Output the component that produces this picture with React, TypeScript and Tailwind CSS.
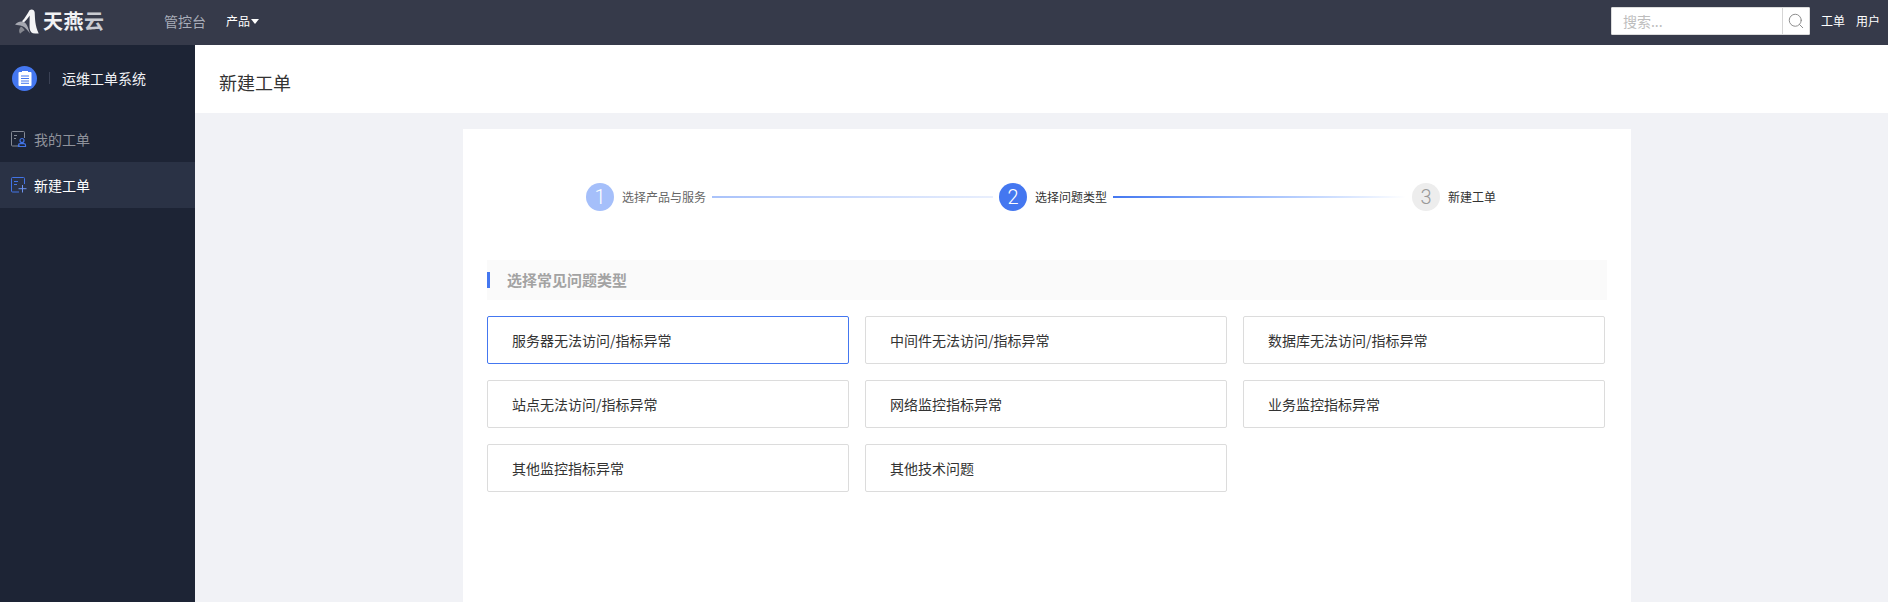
import { Search } from 'lucide-react'

const FONT = "font-['Noto_Sans_CJK_SC','Liberation_Sans',sans-serif]"

const TYPES = [
  '服务器无法访问/指标异常',
  '中间件无法访问/指标异常',
  '数据库无法访问/指标异常',
  '站点无法访问/指标异常',
  '网络监控指标异常',
  '业务监控指标异常',
  '其他监控指标异常',
  '其他技术问题',
]

function Logo() {
  return (
    <svg width="24" height="25" viewBox="0 0 24 25" className="shrink-0">
      <path d="M14.500 1.200C17 -.2 19.500 1 19.700 3.500c.4 6.500.2 13 4 21h-3.500c-3.500 0-5.200-2-5.500-5-.3-3.200 0-8 0-13C13 9 10.500 12 8.500 13.700L7 12.200C10 9.200 12.500 4.500 14.500 1.200z" fill="#f4f4f6" />
      <path d="M0 15.500c3.500-3.800 8.500-3.800 11-.8 1.800 2.200 2.600 5.800 4 9.800-3-3.800-5-6.500-8-7.500-2.200-.7-4.500-.7-7-1.500z" fill="#a5a7b0" />
      <path d="M5 24.800c-1.500-2.500-1-5.300 1-7.300 1.600 1 3 2.300 3.700 3.800-1.600.8-3.200 2-4.700 3.500z" fill="#85878f" />
    </svg>
  )
}

function ClipboardIcon() {
  return (
    <svg width="14" height="16" viewBox="0 0 14 16">
      <path d="M1.500 2h2.500V1h6v1h2.500a1 1 0 0 1 1 1v12a1 1 0 0 1-1 1h-11a1 1 0 0 1-1-1V3a1 1 0 0 1 1-1z" fill="#fff" />
      <path d="M3 6h8M3 8.500h8M3 11h8M3 13.300h8" stroke="#4477f0" strokeWidth="1" />
    </svg>
  )
}

function MyOrdersIcon() {
  return (
    <svg width="16" height="16" viewBox="0 0 16 16" fill="none" className="shrink-0">
      <path d="M9 15H1.500a1 1 0 0 1-1-1V1.500a1 1 0 0 1 1-1h11a1 1 0 0 1 1 1V7" stroke="#858a96" strokeWidth="1" />
      <path d="M3 4.500h3M3 7.500h2" stroke="#858a96" strokeWidth="1" />
      <circle cx="11" cy="9.500" r="2" stroke="#4274e6" strokeWidth="1.200" />
      <path d="M7.500 15.500v-1.500c0-.8 1-1.300 1.800-1.300h3.400c.8 0 1.800.5 1.800 1.300v1.500z" stroke="#4274e6" strokeWidth="1.200" />
    </svg>
  )
}

function NewOrderIcon() {
  return (
    <svg width="16" height="16" viewBox="0 0 16 16" fill="none" className="shrink-0">
      <path d="M8 15H1.500a1 1 0 0 1-1-1V1.500a1 1 0 0 1 1-1h11a1 1 0 0 1 1 1V7" stroke="#4274e6" strokeWidth="1" />
      <path d="M3 4.500h4M3 7.500h3" stroke="#4274e6" strokeWidth="1" />
      <path d="M11.500 8v7.500M7.500 11.700h8" stroke="#6d93ee" strokeWidth="1" />
    </svg>
  )
}

function TopBar() {
  return (
    <header className="h-[45px] shrink-0 bg-[#363a4a] flex items-center pl-[15px] pr-[8px] pb-[3px]">
      <Logo />
      <span className="ml-[4px] w-[112px] text-[20px] leading-none font-bold tracking-[0.5px] text-[#f2f2f4]">
        天燕<span className="text-[#c9cbd2]">云</span>
      </span>
      <span className="ml-[9px] mt-[1px] text-[14px] text-[#a9adb9]">管控台</span>
      <span className="ml-[20px] text-[12px] text-white">产品</span>
      <span className="ml-[1px] w-0 h-0 border-x-[4.500px] border-x-transparent border-t-[5px] border-t-white" />
      <div className="ml-auto flex items-center h-[28px] w-[199px] bg-white border border-[#dcdcdc] rounded-[1px]">
        <span className="flex-1 pl-[11px] text-[14px] text-[#bdbdbd]">搜索...</span>
        <span className="w-[27px] h-full border-l border-[#d5d5d5] flex items-center justify-center">
          <Search size={18} strokeWidth={1.300} className="text-[#8c8c8c]" />
        </span>
      </div>
      <span className="ml-[11px] text-[12px] text-white">工单</span>
      <span className="ml-[11px] text-[12px] text-white">用户</span>
    </header>
  )
}

function Sidebar() {
  return (
    <aside className="w-[195px] shrink-0 bg-[#1d2435]">
      <div className="flex items-center h-[71px] pl-[12px] pb-[5px]">
        <span className="w-[25px] h-[25px] rounded-full bg-[#4477f0] flex items-center justify-center">
          <ClipboardIcon />
        </span>
        <span className="ml-[12px] w-px h-[12px] bg-[#3a4154]" />
        <span className="ml-[12px] text-[14px] text-[#f0f1f4]">运维工单系统</span>
      </div>
      <div className="flex items-center gap-[7px] h-[46px] pl-[11px] text-[14px] text-[#8f929b]">
        <MyOrdersIcon />
        我的工单
      </div>
      <div className="flex items-center gap-[7px] h-[46px] pl-[11px] text-[14px] text-white bg-[#2a3245]">
        <NewOrderIcon />
        新建工单
      </div>
    </aside>
  )
}

function Step({ num, label, state, line }: { num: number; label: string; state: 'done' | 'active' | 'todo'; line?: string }) {
  const circle = {
    done: 'bg-[#a5bffa] text-white',
    active: 'bg-[#4477f0] text-white',
    todo: 'bg-[#ededed] text-[#999999]',
  }[state]
  return (
    <div className={`flex items-center ${line ? 'w-[413px]' : ''}`}>
      <span className={`w-[28px] h-[28px] rounded-full flex items-center justify-center text-[20px] font-['Roboto',sans-serif] font-light ${circle}`}>
        {num}
      </span>
      <span className={`ml-[8px] text-[12px] ${state === 'done' ? 'text-[#666666]' : 'text-[#333333]'}`}>{label}</span>
      {line && <span className={`flex-1 h-[2px] ml-[6px] mr-[6px] ${line}`} />}
    </div>
  )
}

export default function App() {
  return (
    <div className={`h-[602px] overflow-hidden flex flex-col ${FONT}`}>
      <TopBar />
      <div className="flex-1 flex min-h-0">
        <Sidebar />
        <main className="flex-1 min-w-0 flex flex-col bg-[#f1f2f6]">
          <div className="h-[68px] shrink-0 bg-white flex items-center pl-[24px] pt-[7px] text-[18px] text-[#333333]">
            新建工单
          </div>
          <section className="mt-[16px] ml-[268px] w-[1168px] flex-1 bg-white px-[24px]">
            <div className="flex items-center pt-[54px] pl-[99px]">
              <Step num={1} label="选择产品与服务" state="done" line="bg-gradient-to-r from-[#a9c2fa] to-[#e9effd]" />
              <Step num={2} label="选择问题类型" state="active" line="bg-gradient-to-r from-[#4477f0] to-white" />
              <Step num={3} label="新建工单" state="todo" />
            </div>
            <div className="mt-[49px] h-[40px] bg-[#fafafa] flex items-center">
              <span className="w-[3px] h-[16px] bg-[#4477f0]" />
              <span className="ml-[17px] text-[15px] font-bold text-[#a3a3a3]">选择常见问题类型</span>
            </div>
            <div className="mt-[16px] grid grid-cols-[repeat(3,362px)] gap-[16px]">
              {TYPES.map((t, i) => (
                <div
                  key={t}
                  className={`h-[48px] flex items-center pl-[24px] bg-white border rounded-[2px] text-[14px] text-[#333333] ${i === 0 ? 'border-[#4477f0]' : 'border-[#dcdcdc]'}`}
                >
                  {t}
                </div>
              ))}
            </div>
          </section>
        </main>
      </div>
    </div>
  )
}
